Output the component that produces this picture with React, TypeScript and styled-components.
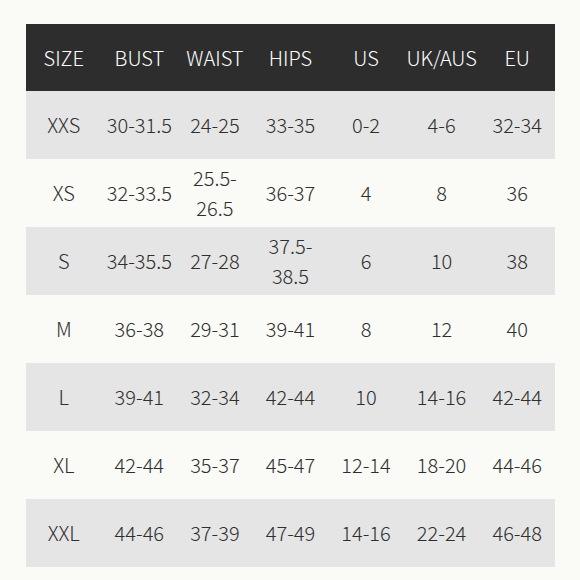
import styled, { createGlobalStyle } from 'styled-components';

const HEADERS = ['SIZE', 'BUST', 'WAIST', 'HIPS', 'US', 'UK/AUS', 'EU'];

const ROWS = [
    ['XXS', '30-31.5', '24-25', '33-35', '0-2', '4-6', '32-34'],
    ['XS', '32-33.5', '25.5-26.5', '36-37', '4', '8', '36'],
    ['S', '34-35.5', '27-28', '37.5-38.5', '6', '10', '38'],
    ['M', '36-38', '29-31', '39-41', '8', '12', '40'],
    ['L', '39-41', '32-34', '42-44', '10', '14-16', '42-44'],
    ['XL', '42-44', '35-37', '45-47', '12-14', '18-20', '44-46'],
    ['XXL', '44-46', '37-39', '47-49', '14-16', '22-24', '46-48'],
];

const GlobalStyle = createGlobalStyle`
    html, body {
        margin: 0;
        padding: 0;
        background: #fafaf7;
    }
`;

const App = () => {
    return (
        <>
            <GlobalStyle />
            <Page>
                <SizeTable>
                    <thead>
                        <tr>
                            {HEADERS.map((h) => (
                                <HeadCell key={h}>{h}</HeadCell>
                            ))}
                        </tr>
                    </thead>
                    <tbody>
                        {ROWS.map((row, index) => (
                            <Row key={row[0]} striped={index % 2 === 0}>
                                {row.map((value, i) => (
                                    <Cell key={i}>{value}</Cell>
                                ))}
                            </Row>
                        ))}
                    </tbody>
                </SizeTable>
            </Page>
        </>
    );
};

export default App;

const Page = styled.div`
    width: 580px;
    height: 580px;
    padding: 24px 25px 0 26px;
    box-sizing: border-box;
    font-family: 'Noto Sans CJK SC', 'Noto Sans', sans-serif;
`;

const SizeTable = styled.table`
    width: 529px;
    border-collapse: collapse;
    table-layout: fixed;
`;

const HeadCell = styled.th`
    height: 67px;
    padding: 0 1px;
    background-color: #2d2d2d;
    color: #ffffff;
    font-size: 20px;
    font-weight: 300;
    text-align: center;
    vertical-align: middle;
`;

const Row = styled.tr<{ striped: boolean }>`
    background-color: ${({ striped }) => (striped ? '#e5e5e5' : 'transparent')};
`;

const Cell = styled.td`
    height: 68px;
    padding: 0 1px;
    color: #2e2e2e;
    font-size: 20px;
    font-weight: 300;
    line-height: 30px;
    text-align: center;
    vertical-align: middle;
`;
